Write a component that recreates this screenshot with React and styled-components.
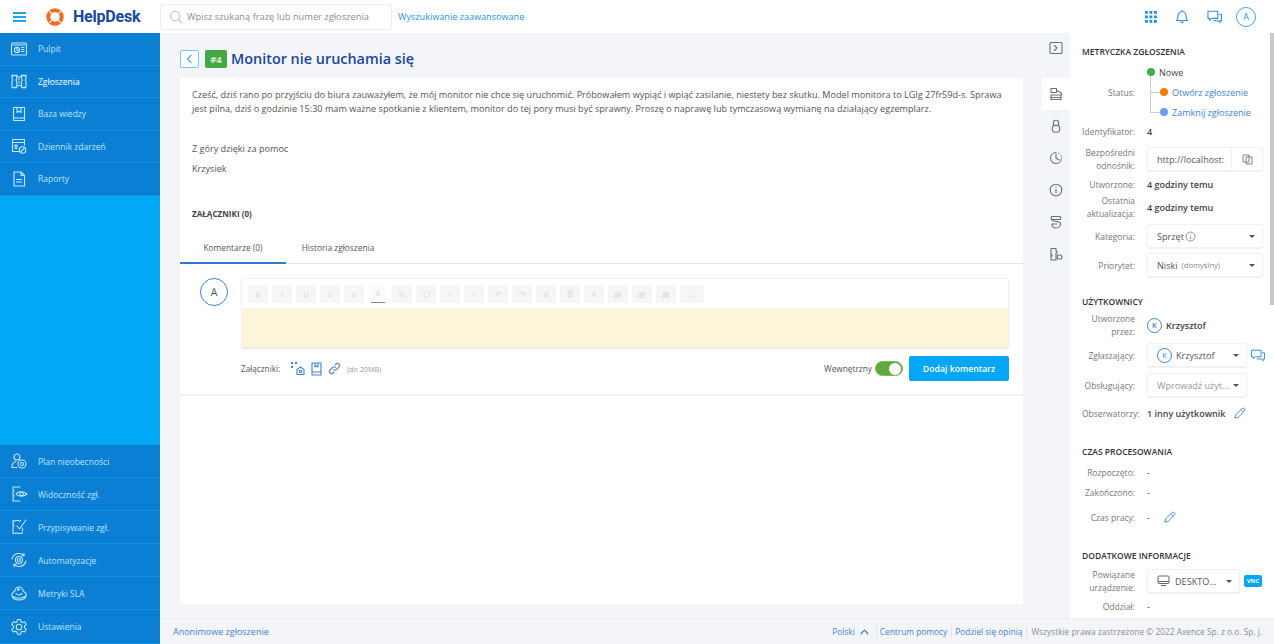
import React from 'react';
import styled, { createGlobalStyle } from 'styled-components';

const Global = createGlobalStyle`
  html, body { margin: 0; padding: 0; height: 644px; overflow: hidden; background: #fff; }
  * { box-sizing: border-box; }
  body { font-family: "Open Sans", "Liberation Sans", sans-serif; color: #444; }
`;

const Page = styled.div`width: 1274px; height: 644px; display: flex; flex-direction: column; overflow: hidden;`;
const Header = styled.header`height: 33px; flex: none; display: flex; align-items: center; background: #fff; position: relative;`;
const Burger = styled.button`
  width: 13px; height: 10px; margin-left: 13px; padding: 0; border: 0; background: none; display: flex; flex-direction: column; justify-content: space-between;
  span { display: block; height: 2px; background: #1ea5ee; }
`;
const Logo = styled.div`display: flex; align-items: center; margin-left: 20px; width: 114px;`;
const LogoText = styled.span`margin-left: 9px; font-family: Roboto, sans-serif; font-weight: 700; font-size: 16px; letter-spacing: -0.2px; color: #17479e;`;
const Search = styled.div`
  width: 232px; height: 26px; display: flex; align-items: center; padding-left: 8px; gap: 4px;
  background: #fff; border: 1px solid #edeff2; border-radius: 3px; font-size: 9.3px; color: #8b8f94;
`;
const AdvLink = styled.a`margin-left: 6px; font-size: 9.1px; color: #1e96e6;`;
const HeaderIcons = styled.div`margin-left: auto; margin-right: 18px; display: flex; align-items: center; gap: 18px;`;
const HeaderAvatar = styled.div`
  width: 20px; height: 20px; margin-left: -4px; border-radius: 50%; border: 1px solid #39a9ee; color: #2d8fdc; font-size: 9px;
  display: flex; align-items: center; justify-content: center;
`;

const Body = styled.div`flex: 1; min-height: 0; display: flex;`;
const Sidebar = styled.nav`width: 160px; flex: none; display: flex; flex-direction: column; justify-content: space-between; background: #02a8f6;`;
const NavGroup = styled.div`display: flex; flex-direction: column;`;
const NavItem = styled.a`
  height: ${p => p.$h || 33}px; display: flex; align-items: center; padding-left: 10px; gap: 10px; background: #0a7fd4;
  border-bottom: 1px solid #0d93e6; font-size: 8.5px; color: ${p => (p.$active ? '#ffffff' : '#bfe4fb')};
  svg { flex: none; width: 18px; height: 18px; fill: none; stroke: #c6e8fd; stroke-width: 1.1; stroke-linecap: round; stroke-linejoin: round; }
`;

const Right = styled.div`flex: 1; min-width: 0; display: flex; flex-direction: column;`;
const Workspace = styled.div`flex: 1; min-height: 0; display: flex; background: #f3f5f8;`;
const Main = styled.main`width: 882px; flex: none; padding: 14px 19px 14px 20px; display: flex; flex-direction: column;`;
const TitleBar = styled.div`height: 31px; flex: none; display: flex; align-items: flex-start; padding-top: 3px;`;
const BackBtn = styled.button`
  width: 19px; height: 18px; padding: 0; background: #fff; border: 1px solid #7cc6f3; border-radius: 2px;
  display: flex; align-items: center; justify-content: center;
`;
const NumBadge = styled.span`
  width: 22px; height: 18px; margin-left: 6px; background: #44a845; border-radius: 2px; color: #d9f0d9; font-size: 9.5px; font-weight: 700;
  display: flex; align-items: center; justify-content: center;
`;
const Title = styled.h1`margin: -2px 0 0 4px; font-size: 14.4px; line-height: 22px; font-weight: 600; color: #17479e;`;

const Card = styled.section`flex: 1; background: #fff; display: flex; flex-direction: column;`;
const Message = styled.div`padding: 10px 16px 0 12px; font-size: 9.1px; line-height: 14px; color: #555;`;
const Para = styled.p`margin: 0 0 ${p => p.$mb || 0}px;`;
const AttachHead = styled.div`margin-top: 31px; padding-left: 12px; height: 14px; font-size: 8.1px; line-height: 14px; font-weight: 700; color: #444;`;
const Tabs = styled.div`margin-top: 9px; height: 34px; flex: none; display: flex; border-bottom: 1px solid #e3e7ec;`;
const Tab = styled.div`
  width: ${p => p.$w}px; height: 34px; display: flex; align-items: center; justify-content: center; font-size: 8.35px; color: #555;
  border-bottom: ${p => (p.$active ? '2px solid #2f79c8' : '0')}; padding-top: ${p => (p.$active ? 2 : 0)}px;
`;
const CommentArea = styled.div`padding: 14px 14px 13px 20px; display: grid; grid-template-columns: 28px 1fr; column-gap: 13px; border-bottom: 2px solid #f1f3f6;`;
const Avatar = styled.div`
  width: 28px; height: 28px; border-radius: 50%; border: 1px solid #3f83cc; color: #555; font-size: 10.5px;
  display: flex; align-items: center; justify-content: center;
`;
const Editor = styled.div`height: 70px; border: 1px solid #eef0f3; border-radius: 2px; box-shadow: 0 1px 1px #e6e6e6; display: flex; flex-direction: column;`;
const ToolRow = styled.div`height: 29px; flex: none; display: flex; align-items: center; gap: 4px; padding-left: 6px; background: #fff;`;
const ToolBtn = styled.span`
  width: ${p => p.$w || 20}px; height: 18px; flex: none; background: #f5f6f8; color: #e3e4e7; font-size: 7.5px; font-weight: 700;
  display: flex; align-items: center; justify-content: center;
  ${p => p.$under && 'border-bottom: 1px solid #888; background: #fbfbfc; margin: 0 3px;'}
`;
const Yellow = styled.div`flex: 1; background: #fdf5d9;`;
const AttachRow = styled.div`
  grid-column: 2; margin-top: 8px; height: 25px; display: flex; align-items: center; font-size: 8.2px; color: #555;
`;
const AttachLabel = styled.span`width: 49px; flex: none;`;
const AttachIcons = styled.span`display: flex; align-items: center; gap: 6px;`;
const Limit = styled.span`margin-left: 6px; font-size: 7.2px; color: #9a9a9a;`;
const Internal = styled.span`margin-left: auto; font-size: 8.3px; color: #555;`;
const Toggle = styled.span`
  margin-left: 3px; width: 28px; height: 15px; background: #5fa83f; border-radius: 8px; border: 1px solid #7dbb62; display: flex; justify-content: flex-end; align-items: center; padding-right: 1px;
  &::after { content: ''; width: 12px; height: 12px; border-radius: 50%; background: #fff; }
`;
const AddBtn = styled.button`
  margin-left: 6px; width: 100px; height: 25px; border: 0; border-radius: 2px; background: #03a7f5; color: #fff; font: 600 8.7px "Open Sans", sans-serif;
`;

const Rail = styled.aside`width: 28px; flex: none; padding-top: 6px; display: flex; flex-direction: column; align-items: center;`;
const RailBtn = styled.div`
  width: 28px; height: ${p => p.$h || 32}px; margin-bottom: ${p => p.$mb || 0}px; display: flex; align-items: center; justify-content: center;
  background: ${p => (p.$active ? '#fff' : 'transparent')};
  svg { width: 14px; height: 14px; fill: none; stroke: #66707c; stroke-width: 1.1; stroke-linecap: round; stroke-linejoin: round; }
`;

const Panel = styled.aside`flex: 1; min-width: 0; background: #fff; padding: 9px 0 0 12px; overflow: hidden; position: relative;`;
const ScrollThumb = styled.div`position: absolute; top: 0; right: 0; width: 4px; height: 272px; background: #c9c9c9;`;
const SectionTitle = styled.h3`margin: ${p => p.$mt || 0}px 0 0; height: 18px; font-size: 8.5px; line-height: 20px; font-weight: 600; color: #333;`;
const Row = styled.div`
  margin-top: ${p => p.$mt || 0}px; height: ${p => p.$h || 18}px; display: grid; grid-template-columns: 53px 1fr; column-gap: 12px; align-items: center;
`;
const Label = styled.div`
  text-align: right; font-size: 8.5px; line-height: 13px; color: #777; white-space: nowrap;
`;
const Value = styled.div`display: flex; align-items: center; font-size: 9px; color: #444; font-weight: ${p => (p.$bold ? 600 : 400)}; white-space: nowrap;`;
const StatusBox = styled.div`display: flex; flex-direction: column; position: relative;`;
const StatusRow = styled.div`
  height: 20px; display: flex; align-items: center; gap: 4px; font-size: 9px; margin-left: ${p => (p.$sub ? 13 : 0)}px; color: ${p => (p.$sub ? '#3f82d2' : '#444')};
  position: relative;
  ${p => p.$sub && `&::before { content: ''; position: absolute; left: -10px; top: 10px; width: 10px; height: 1px; background: #ccc; }`}
`;
const StatusLine = styled.span`position: absolute; left: 3px; top: 14px; height: 37px; width: 1px; background: #ccc;`;
const Dot = styled.span`width: 8px; height: 8px; border-radius: 50%; background: ${p => p.$c}; flex: none;`;
const InputBox = styled.div`
  width: ${p => p.$w || 116}px; height: 24px; display: flex; align-items: center; padding-left: 9px; border: 1px solid #eff1f4; border-radius: 2px; box-shadow: 0 1px 1px #f0f0f0;
  font-size: 9.1px; font-weight: 400; color: #555; white-space: nowrap; background: #fff;
`;
const CopyCell = styled.span`margin-left: auto; width: 31px; height: 22px; border-left: 1px solid #eff1f4; display: flex; align-items: center; justify-content: center;`;
const Caret = styled.span`margin-left: auto; margin-right: 7px; flex: none; width: 0; height: 0; border-left: 3px solid transparent; border-right: 3px solid transparent; border-top: 3px solid #555;`;
const Muted = styled.span`margin-left: 4px; font-size: 7.6px; color: #888;`;
const Gray = styled.span`color: #999;`;
const SmallAvatar = styled.span`
  width: 15px; height: 15px; margin-right: 4px; border-radius: 50%; border: 1px solid #3f83cc; color: #3f83cc; font-size: 7.5px; flex: none;
  display: flex; align-items: center; justify-content: center;
`;
const Vnc = styled.span`
  margin-left: 4px; width: 18px; height: 12px; border-radius: 2px; background: #03a7f5; color: #fff; font-size: 6px; font-weight: 700;
  display: flex; align-items: center; justify-content: center;
`;
const Inline = styled.span`margin-left: ${p => p.$ml || 8}px; display: flex; align-items: center;`;

const Footer = styled.footer`
  height: 26px; flex: none; display: flex; align-items: center; padding: 0 12px 0 13px; background: #f3f5f8; border-top: 1px solid #e9ecf0; font-size: 9px; color: #3f82d2;
`;
const FootRight = styled.div`margin-left: auto; display: flex; align-items: center; font-size: 8.35px;`;
const Lang = styled.span`display: flex; align-items: center; gap: 5px; padding-right: 7px;`;
const FootLink = styled.span`padding: 0 4px 0 3px; border-left: 1px solid #dde3ea; line-height: 12px;`;
const Legal = styled.span`padding-left: 4px; border-left: 1px solid #dde3ea; color: #8a8f96; line-height: 12px;`;

const nav = {
  dash: <svg viewBox="0 0 18 18"><rect x="1.5" y="3" width="15" height="12" rx="1" /><circle cx="7" cy="10" r="2.6" /><path d="M7 7.4V10l1.8 1.6M11.5 7.5h2.5M11.5 9.5h2.5M11.5 11.5h2.5M3 5h12" /></svg>,
  map: <svg viewBox="0 0 18 18"><path d="M2 3l1.200 1L4.500 3 6 4l.8-1v3.500L6 8l.8 1.500V15L6 16l-1.500-1-1.300 1L2 15V9.500L2.800 8 2 6.500zM11.500 3l1.200 1L14 3l1 1 1-1v3.500L15.200 8l.8 1.500V15l-1 1-1-1-1.300 1-1.200-1V9.500l.8-1.500-.8-1.500zM6.800 4.500c1.500.6 3 .6 4.700 0M6.800 14c1.500-.6 3-.6 4.700 0M9 6.500v1.500M9 10v1.500" /></svg>,
  book: <svg viewBox="0 0 18 18"><path d="M3.500 2.500h11v13h-11zM3.500 13h11M7 2.500v5l2-1.300 2 1.300v-5" /></svg>,
  log: <svg viewBox="0 0 18 18"><path d="M9 14.500H2.500v-12h12V8M2.500 5.500h12M5 8h2v2H5zM5 11.500h2" /><circle cx="12.500" cy="13" r="3.200" /><path d="M11 14.500l3-3" /></svg>,
  report: <svg viewBox="0 0 18 18"><path d="M4 2h7l3.500 3.500V16H4zM11 2v3.500h3.500M6.500 9.500h5M6.500 12h5" /></svg>,
  absence: <svg viewBox="0 0 18 18"><circle cx="7" cy="5" r="3" /><path d="M2 15c0-3 1.500-5 4-5.500" /><path d="M2 15.500h5" /><circle cx="12" cy="12" r="4" /><circle cx="12" cy="12" r="1.500" /></svg>,
  eye: <svg viewBox="0 0 18 18"><path d="M3 2h7M3 2v3l1 1-1 1v3l1 1-1 1v4h7" /><path d="M6 9c2-3 8-3 11 0-3 3-9 3-11 0z" /><circle cx="11.500" cy="9" r="1.800" /></svg>,
  assign: <svg viewBox="0 0 18 18"><path d="M3 2.500c1 1 2 1 2.500 0h3c.5 1 1.500 1 2 0M3 2.500v4l1 1-1 1v7h2.500c.5-1 1.500-1 2 0H11c.5-1 1-1 1.500-.5M12.500 10v3" /><path d="M7 8l2.500 3L16 2" /></svg>,
  auto: <svg viewBox="0 0 18 18"><path d="M2 8c1-3.500 4-5.500 7-5.500 2 0 4 .8 5 2M16 10c-1 3.500-4 5.500-7 5.500-2 0-4-.8-5-2" /><path d="M14 2.500v2.200h-2.200M4 15.500v-2.200h2.200" /><circle cx="9" cy="9" r="3.500" /><circle cx="9" cy="9" r="1.500" /></svg>,
  sla: <svg viewBox="0 0 18 18"><path d="M5 7a4 4 0 0 1 8 0c2 1 3.500 3 3 5-1 3-4 4-7 4s-6-1-7-4c-.5-2 1-4 3-5z" /><path d="M6 9.500c1.500 2 4 2 6 0M3 12.500c3 2 8 2 12 0M8 3.500v3M10 5.500H7.500" /></svg>,
  gear: <svg viewBox="0 0 18 18"><path d="M7.500 1.500h3l.5 2.300 1.500.8 2.200-.8 1.500 2.600-1.700 1.600v1.800l1.700 1.600-1.500 2.600-2.200-.8-1.500.8-.5 2.300h-3l-.5-2.300-1.500-.8-2.200.8L1.800 11.400l1.700-1.600V8L1.800 6.400l1.500-2.600 2.200.8L7 3.800z" /><circle cx="9" cy="9" r="2.800" /></svg>,
};

const Chat = ({ size = 15, color = '#2f8fdc' }) => (
  <svg width={size} height={size} viewBox="0 0 16 16" fill="none" stroke={color} strokeWidth="1.1" strokeLinejoin="round" strokeLinecap="round">
    <path d="M1 2.500h10.500v7.500H5L2.500 12V10H1z" />
    <path d="M13 5.500h2.500V12.500H14V14.500L11.500 12.500H7" />
  </svg>
);
const Pencil = () => (
  <svg width="13" height="13" viewBox="0 0 14 14" fill="none" stroke="#4a86c8" strokeWidth="1" strokeLinejoin="round">
    <path d="M2 12l.8-3.500L9.500 1.800a1.500 1.500 0 0 1 2.700 2.700L5.500 11.200z" /><path d="M8.500 3l2.500 2.500" />
  </svg>
);

const Tool = ['B', 'I', 'U', 'S', 'x', 'A', '%', '☐', '≡', '≡', '↶', '↷', '⊘', '≣', 'A', '▤', '▥', '▦'];

export default function App() {
  return (
    <Page>
      <Global />
      <Header>
        <Burger aria-label="menu"><span /><span /><span /></Burger>
        <Logo>
          <svg width="18" height="18" viewBox="0 0 18 18" fill="none">
            <circle cx="9" cy="9" r="6.700" stroke="#ef6c22" strokeWidth="4" />
            <path d="M3.200 3.200l3 3M14.800 3.200l-3 3M3.200 14.800l3-3M14.800 14.800l-3-3" stroke="#fff" strokeWidth="1.200" />
          </svg>
          <LogoText>HelpDesk</LogoText>
        </Logo>
        <Search>
          <svg width="14" height="14" viewBox="0 0 14 14" fill="none" stroke="#c6c9cd" strokeWidth="1.200"><circle cx="6" cy="6" r="4.800" /><path d="M9.500 9.500L13 13" /></svg>
          Wpisz szukaną frazę lub numer zgłoszenia
        </Search>
        <AdvLink>Wyszukiwanie zaawansowane</AdvLink>
        <HeaderIcons>
          <svg width="12" height="12" viewBox="0 0 12 12" fill="#1592ea">
            {[0, 4.5, 9].flatMap(y => [0, 4.5, 9].map(x => <rect key={`${x}-${y}`} x={x} y={y} width="2.800" height="2.800" />))}
          </svg>
          <svg width="14" height="15" viewBox="0 0 14 15" fill="none" stroke="#2f8fdc" strokeWidth="1.100" strokeLinejoin="round">
            <path d="M1.500 11.500c1.300-1 1.500-2 1.500-4.500 0-2.500 1.700-4.500 4-4.500s4 2 4 4.500c0 2.500.2 3.500 1.500 4.500z" /><path d="M5.500 12.500c.3 1.500 2.700 1.500 3 0M7 1v1.500" />
          </svg>
          <Chat />
          <HeaderAvatar>A</HeaderAvatar>
        </HeaderIcons>
      </Header>
      <Body>
        <Sidebar>
          <NavGroup>
            <NavItem $h={32.5}>{nav.dash}Pulpit</NavItem>
            <NavItem $h={32.5} $active>{nav.map}Zgłoszenia</NavItem>
            <NavItem $h={32.5}>{nav.book}Baza wiedzy</NavItem>
            <NavItem $h={32.5}>{nav.log}Dziennik zdarzeń</NavItem>
            <NavItem $h={32.5}>{nav.report}Raporty</NavItem>
          </NavGroup>
          <NavGroup>
            <NavItem>{nav.absence}Plan nieobecności</NavItem>
            <NavItem>{nav.eye}Widoczność zgł.</NavItem>
            <NavItem>{nav.assign}Przypisywanie zgł.</NavItem>
            <NavItem>{nav.auto}Automatyzacje</NavItem>
            <NavItem>{nav.sla}Metryki SLA</NavItem>
            <NavItem $h={34}>{nav.gear}Ustawienia</NavItem>
          </NavGroup>
        </Sidebar>
        <Right>
          <Workspace>
            <Main>
              <TitleBar>
                <BackBtn aria-label="wstecz">
                  <svg width="7" height="10" viewBox="0 0 7 10" fill="none" stroke="#49aef0" strokeWidth="1.200"><path d="M5.500 1L1.500 5l4 4" /></svg>
                </BackBtn>
                <NumBadge>#4</NumBadge>
                <Title>Monitor nie uruchamia się</Title>
              </TitleBar>
              <Card>
                <Message>
                  <Para $mb={26}>Cześć, dziś rano po przyjściu do biura zauważyłem, że mój monitor nie chce się uruchomić. Próbowałem wypiąć i wpiąć zasilanie, niestety bez skutku. Model monitora to LGlg 27fr59d-s. Sprawa jest pilna, dziś o godzinie 15:30 mam ważne spotkanie z klientem, monitor do tej pory musi być sprawny. Proszę o naprawę lub tymczasową wymianę na działający egzemplarz.</Para>
                  <Para $mb={6}>Z góry dzięki za pomoc</Para>
                  <Para>Krzysiek</Para>
                </Message>
                <AttachHead>ZAŁĄCZNIKI (0)</AttachHead>
                <Tabs>
                  <Tab $active $w={106}>Komentarze (0)</Tab>
                  <Tab $w={104}>Historia zgłoszenia</Tab>
                </Tabs>
                <CommentArea>
                  <Avatar>A</Avatar>
                  <Editor>
                    <ToolRow>
                      {Tool.map((t, i) => <ToolBtn key={i} $under={i === 5} $w={i === 5 ? 14 : 20}>{t}</ToolBtn>)}
                      <ToolBtn $w={24}>…</ToolBtn>
                    </ToolRow>
                    <Yellow />
                  </Editor>
                  <AttachRow>
                    <AttachLabel>Załączniki:</AttachLabel>
                    <AttachIcons>
                      <svg width="15" height="15" viewBox="0 0 15 15" fill="none" stroke="#3f83cc" strokeWidth="1.100" strokeLinejoin="round">
                        <circle cx="2" cy="2" r=".6" fill="#3f83cc" /><circle cx="6" cy="2" r=".6" fill="#3f83cc" /><circle cx="2" cy="6" r=".6" fill="#3f83cc" />
                        <path d="M7 13.500v-5l3.500-2.500 3.500 2.500v5z" /><circle cx="10.500" cy="10.500" r="1.200" />
                      </svg>
                      <svg width="11" height="14" viewBox="0 0 11 14" fill="none" stroke="#3f83cc" strokeWidth="1.100" strokeLinejoin="round">
                        <path d="M1 1h9v12H1zM1 10h9M4 1v4l1.500-1L7 5V1" />
                      </svg>
                      <svg width="13" height="13" viewBox="0 0 13 13" fill="none" stroke="#5a8ac0" strokeWidth="1.100" strokeLinecap="round">
                        <path d="M5.500 7.500a2 2 0 0 0 3 0l2.500-2.500a2 2 0 0 0-3-3L7 3M7.500 5.500a2 2 0 0 0-3 0L2 8a2 2 0 0 0 3 3l1-1" />
                      </svg>
                    </AttachIcons>
                    <Limit>(do 20MB)</Limit>
                    <Internal>Wewnętrzny</Internal>
                    <Toggle />
                    <AddBtn>Dodaj komentarz</AddBtn>
                  </AttachRow>
                </CommentArea>
              </Card>
            </Main>
            <Rail>
              <RailBtn $h={18} $mb={21}>
                <svg viewBox="0 0 14 14"><rect x="1" y="1.500" width="12" height="11" rx="1" /><path d="M5.500 4.500L8 7l-2.500 2.500" /></svg>
              </RailBtn>
              <RailBtn $active>
                <svg viewBox="0 0 14 14"><path d="M2 1.500h5.500v4H2zM2 8h10v4.500H2zM7.500 3.500l5 2.500v2M2 10.500h10" /></svg>
              </RailBtn>
              <RailBtn>
                <svg viewBox="0 0 14 14"><circle cx="7" cy="4" r="2.700" /><path d="M4.500 6.500c-2 2-1.500 6 0 6.500h5c1.500-.5 2-4.500 0-6.500" /></svg>
              </RailBtn>
              <RailBtn>
                <svg viewBox="0 0 14 14"><path d="M7 3v4l3 2M7 1.500a5.500 5.500 0 1 0 5.500 6.500M9.800 2.300v.1M12 4.500v.1M12.800 6v.1" /></svg>
              </RailBtn>
              <RailBtn>
                <svg viewBox="0 0 14 14"><circle cx="7" cy="7" r="5.800" /><path d="M7 6.300v3.700M7 4v.2" /></svg>
              </RailBtn>
              <RailBtn>
                <svg viewBox="0 0 14 14"><path d="M3 1.500h8c1 0 1 3 0 3H3c-1 0-1-3 0-3zM3 4.500c-1 2 7 1.500 8.500 3.500 1 2-1.500 5-4.500 5S2.500 10.500 3 9M3 9h5" /></svg>
              </RailBtn>
              <RailBtn>
                <svg viewBox="0 0 14 14"><path d="M2 1.500h5v2.500c1.500 0 1.500 2 0 2v7H2zM2 7.500c1.500 0 1.500 2 0 2M8.500 8h2.500a1.500 1.500 0 0 1 0 4H8.500z" /></svg>
              </RailBtn>
            </Rail>
            <Panel>
              <ScrollThumb />
              <SectionTitle>METRYCZKA ZGŁOSZENIA</SectionTitle>
              <Row $mt={2} $h={60}>
                <Label>Status:</Label>
                <StatusBox>
                  <StatusLine />
                  <StatusRow><Dot $c="#3fae49" />Nowe</StatusRow>
                  <StatusRow $sub><Dot $c="#f67c0f" />Otwórz zgłoszenie</StatusRow>
                  <StatusRow $sub><Dot $c="#6f9cf5" />Zamknij zgłoszenie</StatusRow>
                </StatusBox>
              </Row>
              <Row><Label>Identyfikator:</Label><Value $bold>4</Value></Row>
              <Row $mt={6} $h={24}>
                <Label>Bezpośredni<br />odnośnik:</Label>
                <InputBox>
                  http://localhost:
                  <CopyCell>
                    <svg width="11" height="11" viewBox="0 0 11 11" fill="none" stroke="#777" strokeWidth="0.900"><path d="M1 1h6v7H1z" /><path d="M4 3h6v7H4z" /></svg>
                  </CopyCell>
                </InputBox>
              </Row>
              <Row $mt={5}><Label>Utworzone:</Label><Value $bold>4 godziny temu</Value></Row>
              <Row $h={28}><Label>Ostatnia<br />aktualizacja:</Label><Value $bold>4 godziny temu</Value></Row>
              <Row $mt={3} $h={24}>
                <Label>Kategoria:</Label>
                <InputBox>
                  Sprzęt
                  <svg style={{ marginLeft: 1 }} width="11" height="11" viewBox="0 0 11 11" fill="none" stroke="#777" strokeWidth="0.800"><circle cx="5.500" cy="5.500" r="4.500" /><path d="M5.500 5v3M5.500 3v.6" /></svg>
                  <Caret />
                </InputBox>
              </Row>
              <Row $mt={5} $h={24}>
                <Label>Priorytet:</Label>
                <InputBox>Niski<Muted>(domyślny)</Muted><Caret /></InputBox>
              </Row>
              <SectionTitle $mt={15}>UŻYTKOWNICY</SectionTitle>
              <Row $mt={1} $h={28}>
                <Label>Utworzone<br />przez:</Label>
                <Value $bold><SmallAvatar>K</SmallAvatar>Krzysztof</Value>
              </Row>
              <Row $mt={4} $h={24}>
                <Label>Zgłaszający:</Label>
                <Value>
                  <InputBox $w={100}><SmallAvatar>K</SmallAvatar>Krzysztof<Caret /></InputBox>
                  <Inline $ml={4}><Chat size={14} /></Inline>
                </Value>
              </Row>
              <Row $mt={6} $h={24}>
                <Label>Obsługujący:</Label>
                <InputBox $w={100}><Gray>Wprowadź użyt...</Gray><Caret /></InputBox>
              </Row>
              <Row $mt={7}>
                <Label>Obserwatorzy:</Label>
                <Value $bold>1 inny użytkownik<Inline><Pencil /></Inline></Value>
              </Row>
              <SectionTitle $mt={20}>CZAS PROCESOWANIA</SectionTitle>
              <Row $mt={3}><Label>Rozpoczęto:</Label><Value>-</Value></Row>
              <Row $mt={2}><Label>Zakończono:</Label><Value>-</Value></Row>
              <Row $mt={7}><Label>Czas pracy:</Label><Value>-<Inline $ml={13}><Pencil /></Inline></Value></Row>
              <SectionTitle $mt={20}>DODATKOWE INFORMACJE</SectionTitle>
              <Row $mt={3} $h={28}>
                <Label>Powiązane<br />urządzenie:</Label>
                <Value>
                  <InputBox $w={93}>
                    <svg style={{ marginRight: 5, flex: 'none' }} width="13" height="12" viewBox="0 0 13 12" fill="none" stroke="#666" strokeWidth="1"><rect x="1" y="1" width="11" height="7.500" rx="1" /><path d="M1 6.500h11M4 10.500h5" /></svg>
                    DESKTO...
                    <Caret />
                  </InputBox>
                  <Vnc>VNC</Vnc>
                </Value>
              </Row>
              <Row $mt={2}><Label>Oddział:</Label><Value>-</Value></Row>
            </Panel>
          </Workspace>
          <Footer>
            <span>Anonimowe zgłoszenie</span>
            <FootRight>
              <Lang>
                Polski
                <svg width="9" height="6" viewBox="0 0 9 6" fill="none" stroke="#3f82d2" strokeWidth="1.200"><path d="M.8 5L4.500 1.200 8.200 5" /></svg>
              </Lang>
              <FootLink>Centrum pomocy</FootLink>
              <FootLink>Podziel się opinią</FootLink>
              <Legal>Wszystkie prawa zastrzeżone © 2022 Axence Sp. z o.o. Sp. j.</Legal>
            </FootRight>
          </Footer>
        </Right>
      </Body>
    </Page>
  );
}
